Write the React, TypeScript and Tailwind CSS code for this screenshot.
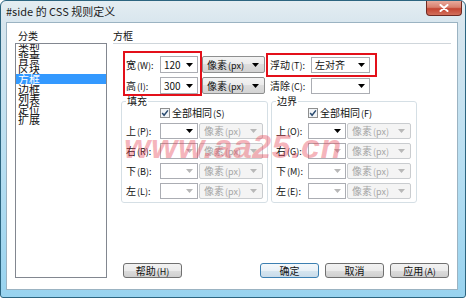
import React from 'react';

const cjk = "font-['Noto_Sans_CJK_SC','Liberation_Sans',sans-serif]";

const Arrow: React.FC<{ dim?: boolean }> = ({ dim }) => (
  <svg width="7" height="4" viewBox="0 0 7 4" className="shrink-0">
    <path d="M0 0h7L3.5 4z" fill={dim ? '#b8b8b8' : '#000'} />
  </svg>
);

// CJK part at 10px, the "(X):" mnemonic a touch smaller like the bitmap font
const Label: React.FC<{ text: string; className?: string }> = ({ text, className = '' }) => {
  const i = text.indexOf('(');
  const head = i < 0 ? text : text.slice(0, i);
  const tail = i < 0 ? '' : text.slice(i);
  return (
    <span className={`whitespace-nowrap text-[10px] leading-none ${className}`}>
      {head}
      {tail && <span className="text-[9px] ml-[1px]">{tail}</span>}
    </span>
  );
};

interface ComboProps {
  value?: string;
  className: string;
  dim?: boolean;
}

const ValueCombo: React.FC<ComboProps> = ({ value, className, dim }) => (
  <div
    className={`flex items-center justify-between bg-white border border-[#abadb3] pl-[3px] pr-[4px] text-[10px] leading-none ${className}`}
  >
    <span className="whitespace-nowrap">{value}</span>
    <Arrow dim={dim} />
  </div>
);

const UnitCombo: React.FC<{ className: string; disabled?: boolean }> = ({ className, disabled }) => (
  <div
    className={
      disabled
        ? `flex items-center justify-between bg-[#f4f4f4] border border-[#c9cccf] rounded-[2px] pl-[4px] pr-[5px] text-[#a6a6a6] ${className}`
        : `flex items-center justify-between bg-[linear-gradient(#f3f3f3_0%,#ebebeb_50%,#dddddd_50%,#d3d3d3_100%)] border border-[#8e8f8f] rounded-[2px] pl-[4px] pr-[5px] ${className}`
    }
  >
    <Label text="像素(px)" />
    <Arrow dim={disabled} />
  </div>
);

const Check: React.FC<{ label: string; offset: string }> = ({ label, offset }) => (
  <div className={`flex items-center h-[12px] mt-[1px] ${offset}`}>
    <svg width="10" height="10" viewBox="0 0 10 10" className="shrink-0">
      <rect x="0.5" y="0.5" width="9" height="9" fill="#f1f4f7" stroke="#8e8f8f" />
      <path d="M2.2 5 L4.1 7.3 L7.9 2.4" stroke="#2a4b70" strokeWidth="1.5" fill="none" />
    </svg>
    <Label text={label} className="ml-[2px]" />
  </div>
);

const BoxRow: React.FC<{ label: string; first?: boolean; labelW: string }> = ({ label, first, labelW }) => (
  <div className="flex items-center h-[16px] pl-[4px]">
    <span className={`${labelW} flex`}>
      <Label text={label} />
    </span>
    <ValueCombo className="w-[38px] h-[16px]" dim={!first} />
    <UnitCombo className="ml-[1px] w-[64px] h-[16px]" disabled />
  </div>
);

const Group: React.FC<{ title: string; check: string; labels: string[]; width: string; labelW: string; checkOffset: string }> = ({
  title,
  check,
  labels,
  width,
  labelW,
  checkOffset,
}) => (
  <fieldset className={`${width} min-w-0 border border-[#d5dfe5] rounded-[3px] pb-[3px]`}>
    <legend className="ml-[4px] px-[1px] text-[10px] leading-[10px]">{title}</legend>
    <Check label={check} offset={checkOffset} />
    <div className="mt-[4px] flex flex-col gap-[4px]">
      {labels.map((l, i) => (
        <BoxRow key={l} label={l} first={i === 0} labelW={labelW} />
      ))}
    </div>
  </fieldset>
);

const Button: React.FC<{ label: string; primary?: boolean }> = ({ label, primary }) => (
  <div
    className={
      primary
        ? 'w-[59px] h-[15px] flex items-center justify-center rounded-[3px] border border-[#3c7fb1] bg-[linear-gradient(#f4f8fb_0%,#e9f1f7_50%,#d7e6f0_50%,#c9dcea_100%)]'
        : 'w-[59px] h-[15px] flex items-center justify-center rounded-[3px] border border-[#707070] bg-[linear-gradient(#f2f2f2_0%,#ebebeb_50%,#dddddd_50%,#cfcfcf_100%)]'
    }
  >
    <Label text={label} />
  </div>
);

const categories = ['类型', '背景', '区块', '方框', '边框', '列表', '定位', '扩展'];

export default function App() {
  return (
    <div
      className={`relative w-[466px] h-[298px] overflow-hidden rounded-t-[6px] rounded-b-[3px] border border-[#2c6580] bg-[linear-gradient(to_bottom,#e4edf2_0px,#d8e6ee_22px,#b8dff2_55%,#98d3ef_100%)] text-[#111] ${cjk}`}
    >
      <div className="h-[21px] flex items-center pl-[5px] text-[11px] leading-none text-[#1c1c1c] whitespace-nowrap">
        #side 的 CSS 规则定义
      </div>

      <div className="absolute right-[3px] top-0 w-[36px] h-[15px] rounded-b-[4px] border border-t-0 border-[#6f2a22] bg-[linear-gradient(#e9aa9c_0%,#d8806e_45%,#c44532_55%,#d2705c_100%)] flex items-center justify-center">
        <svg width="10" height="8" viewBox="0 0 10 8">
          <path d="M1.5 1 L8.5 7 M8.5 1 L1.5 7" stroke="#fff" strokeWidth="2" strokeLinecap="round" />
        </svg>
      </div>

      <div className="ml-[5px] w-[452px] h-[268px] bg-white border border-[#9bb3c2] flex">
        <div className="ml-[8px] pt-[5px] w-[92px] flex flex-col">
          <div className="h-[15px] text-[10px] leading-[15px] pl-[3px]">分类</div>
          <div className="h-[235px] border border-[#828790] bg-white overflow-hidden">
            <div className="flex flex-col">
              {categories.map((c) => (
                <div
                  key={c}
                  className={
                    c === '方框'
                      ? 'h-[10px] leading-[10px] text-[11px] pl-[2px] bg-[#3399ff] text-white'
                      : 'h-[10px] leading-[10px] text-[11px] pl-[2px]'
                  }
                >
                  {c}
                </div>
              ))}
            </div>
          </div>
        </div>

        <div className="ml-[6px] flex-1 pr-[6px] pt-[5px] pb-[11px] flex flex-col">
          <div className="h-[15px] text-[10px] leading-[15px]">方框</div>
          <div className="border-t border-[#cfd6db]" />

          <div className="flex items-start mt-[7px] ml-[10px]">
            <div className="w-[79px] h-[45px] border-2 border-[#e3101a] pt-[3px] pl-[1px] pr-[2px] flex flex-col gap-[4px]">
              <div className="flex items-center h-[17px]">
                <span className="w-[34px] flex">
                  <Label text="宽(W):" />
                </span>
                <ValueCombo value="120" className="w-[38px] h-[17px]" />
              </div>
              <div className="flex items-center h-[17px]">
                <span className="w-[34px] flex">
                  <Label text="高(I):" />
                </span>
                <ValueCombo value="300" className="w-[38px] h-[17px]" />
              </div>
            </div>
            <div className="pt-[5px] flex flex-col gap-[4px]">
              <UnitCombo className="w-[63px] h-[17px]" />
              <UnitCombo className="w-[63px] h-[17px]" />
            </div>
            <div className="ml-[1px] mt-[2px] flex flex-col">
              <div className="w-[111px] h-[24px] border-2 border-[#e3101a] pl-[2px] pt-[2px] flex items-start">
                <span className="w-[41px] h-[16px] flex items-center">
                  <Label text="浮动(T):" />
                </span>
                <ValueCombo value="左对齐" className="w-[59px] h-[16px]" />
              </div>
              <div className="mt-[1px] pl-[4px] h-[16px] flex items-center">
                <span className="w-[41px] flex">
                  <Label text="清除(C):" />
                </span>
                <ValueCombo className="w-[59px] h-[16px]" />
              </div>
            </div>
          </div>

          <div className="ml-[8px] flex gap-[3px] items-start">
            <Group
              title="填充"
              check="全部相同(S)"
              labels={['上(P):', '右(R):', '下(B):', '左(L):']}
              width="w-[147px]"
              labelW="w-[34px]"
              checkOffset="ml-[38px]"
            />
            <Group
              title="边界"
              check="全部相同(F)"
              labels={['上(O):', '右(G):', '下(M):', '左(E):']}
              width="w-[146px]"
              labelW="w-[32px]"
              checkOffset="ml-[36px]"
            />
          </div>

          <div className="mt-auto flex items-end">
            <div className="ml-[10px]">
              <Button label="帮助(H)" />
            </div>
            <div className="flex-1" />
            <div className="flex gap-[6px] mr-[2px]">
              <Button label="确定" primary />
              <Button label="取消" />
              <Button label="应用(A)" />
            </div>
          </div>
        </div>
      </div>

      <div className="pointer-events-none absolute left-[123px] top-[128px] text-[34px] leading-none font-bold italic text-[rgba(230,60,78,0.38)] font-['Liberation_Sans',sans-serif] tracking-[0.5px] whitespace-nowrap">
        www.aa25.cn
      </div>
    </div>
  );
}
